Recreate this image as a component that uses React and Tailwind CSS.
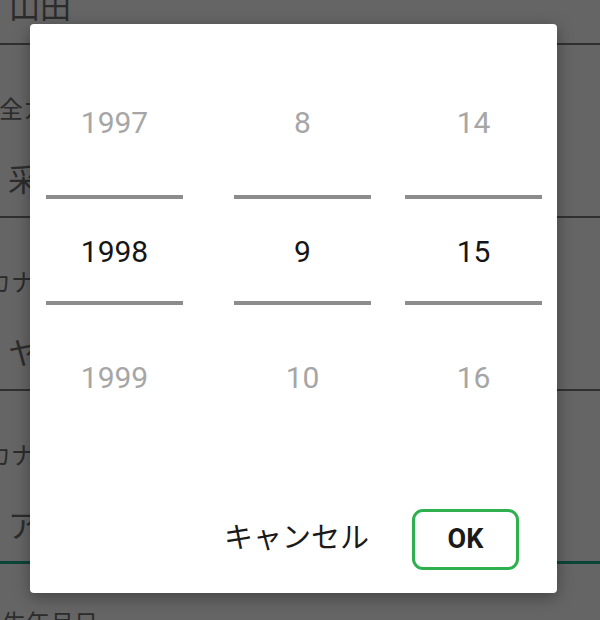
import React from "react";

const cols = [
  { w: "ml-[16px]", items: ["1997", "1998", "1999"] },
  { w: "ml-[51px]", items: ["8", "9", "10"] },
  { w: "ml-[34px]", items: ["14", "15", "16"] },
];

function Column({ items, cls }) {
  return (
    <div className={`flex w-[137px] flex-col ${cls}`}>
      <div className="mt-[27px] flex h-[144px] items-center justify-center text-[30px] leading-none text-[#a6a6a6]">
        {items[0]}
      </div>
      <div className="h-[4px] bg-[#8c8c8c]" />
      <div className="flex h-[102px] items-center justify-center pt-[3px] text-[30px] leading-none text-[#151515]">
        {items[1]}
      </div>
      <div className="h-[4px] bg-[#8c8c8c]" />
      <div className="flex h-[146px] items-center justify-center text-[30px] leading-none text-[#a6a6a6]">
        {items[2]}
      </div>
    </div>
  );
}

function Field({ label, labelCls, value, green }) {
  return (
    <div
      className={`flex h-[173px] flex-col ${
        green ? "border-b-[3px] border-[#0c4438]" : "border-b-2 border-[#303030]"
      }`}
    >
      <div className={`pt-[49px] text-[24px] leading-[28px] text-[#2c2c2c] ${labelCls}`}>{label}</div>
      <div className="pl-[8px] pt-[38px] text-[31px] leading-[36px] text-[#2c2c2c]">{value}</div>
    </div>
  );
}

export default function App() {
  return (
    <div
      className="relative h-[620px] w-[600px] overflow-hidden bg-[#656565]"
      style={{ fontFamily: '"Noto Sans CJK JP", "Noto Sans", sans-serif' }}
    >
      {/* dimmed form behind */}
      <div className="flex flex-col">
        <div className="h-[45px] border-b-2 border-[#303030] pl-[9px]">
          <div className="-mt-[13px] text-[31px] leading-[36px] text-[#2c2c2c]">山田</div>
        </div>
        <Field label="全カナ" labelCls="-ml-[1px]" value="采香" />
        <Field label="カナ（セイ）" labelCls="-ml-[13px]" value="ヤマダ" />
        <Field label="カナ（メイ）" labelCls="-ml-[13px]" value="アヤカ" green />
        <div className="pt-[44px] pl-[2px] text-[24px] leading-[28px] text-[#2c2c2c]">生年月日</div>
      </div>

      {/* dialog */}
      <div className="absolute left-[30px] top-[24px] h-[569px] w-[527px] rounded-[4px] bg-white shadow-[0_4px_16px_rgba(0,0,0,0.35)]">
        <div className="flex" style={{ fontFamily: 'Roboto, "Noto Sans", sans-serif' }}>
          {cols.map((c, i) => (
            <Column key={i} items={c.items} cls={c.w} />
          ))}
        </div>
        <div className="mt-[58px] flex items-center justify-end pr-[38px]">
          <span className="mb-[9px] mr-[43px] text-[29px] leading-none text-[#1a1a1a]">キャンセル</span>
          <div
            className="flex h-[61px] w-[107px] items-center justify-center rounded-[11px] border-[3px] border-[#2db04d] text-[27px] font-bold leading-none text-[#1a1a1a]"
            style={{ fontFamily: 'Roboto, "Noto Sans", sans-serif' }}
          >
            OK
          </div>
        </div>
      </div>
    </div>
  );
}
